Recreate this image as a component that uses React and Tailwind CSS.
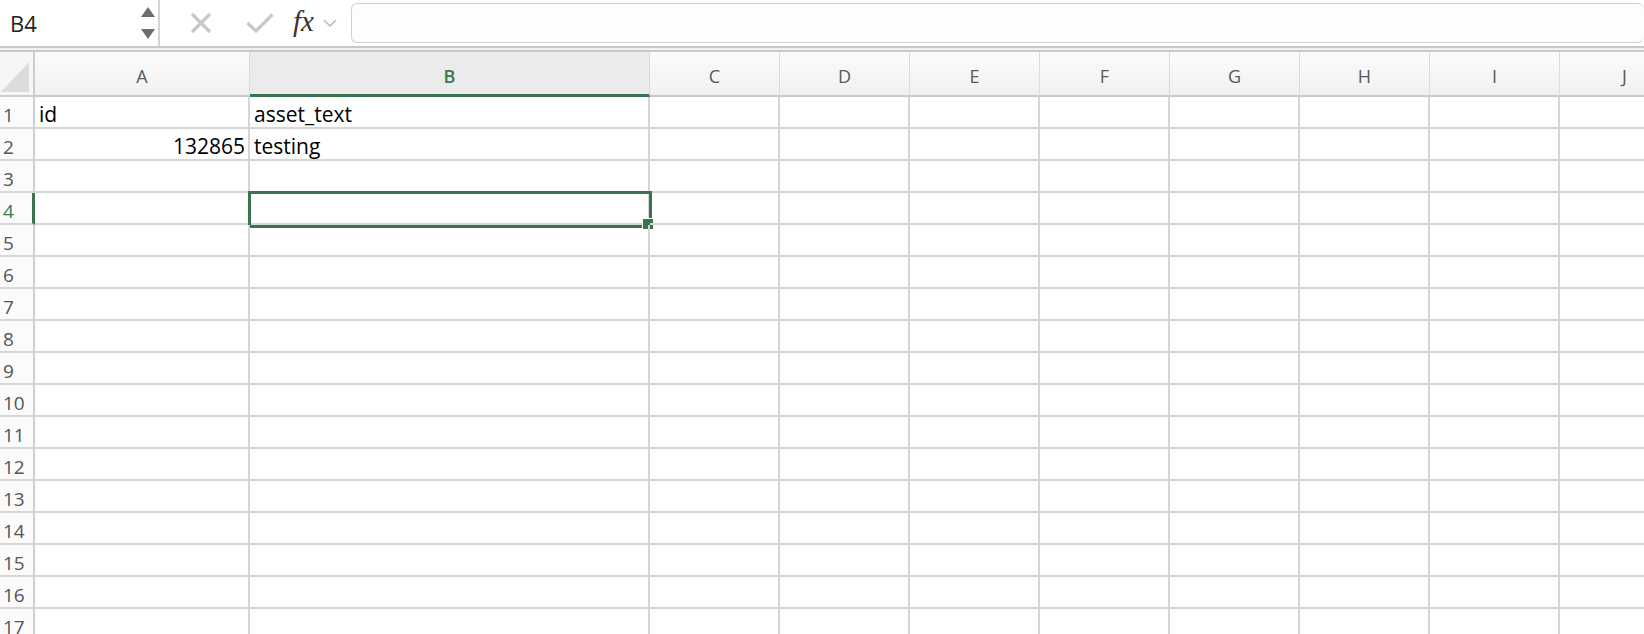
import React from 'react';

const columns = [
  { id: 'A', w: 215 },
  { id: 'B', w: 400 },
  { id: 'C', w: 130 },
  { id: 'D', w: 130 },
  { id: 'E', w: 130 },
  { id: 'F', w: 130 },
  { id: 'G', w: 130 },
  { id: 'H', w: 130 },
  { id: 'I', w: 130 },
  { id: 'J', w: 130 },
];

const data = {
  1: { A: { v: 'id' }, B: { v: 'asset_text' } },
  2: { A: { v: '132865', right: true }, B: { v: 'testing' } },
};

const rows = Array.from({ length: 17 }, (_, i) => i + 1);

const gridCols = 'grid grid-cols-[35px_215px_400px_130px_130px_130px_130px_130px_130px_130px_130px]';

const Toolbar = () => (
  <div className="flex h-[46px] bg-white">
    {/* Name box */}
    <div className="flex w-[160px] shrink-0 items-center justify-between border-r-2 border-[#d4d4d4] pl-[10px] pr-[3px]">
      <span className="text-[22px] text-[#222] pt-[1px]">B4</span>
      <div className="flex flex-col gap-[12px]">
        <svg width="14" height="10" viewBox="0 0 14 10">
          <polygon points="7,0 14,10 0,10" fill="#6e6e6e" />
        </svg>
        <svg width="14" height="10" viewBox="0 0 14 10">
          <polygon points="0,0 14,0 7,10" fill="#6e6e6e" />
        </svg>
      </div>
    </div>

    {/* Cancel / enter / fx */}
    <div className="flex items-center pl-[30px]">
      <svg width="22" height="22" viewBox="0 0 22 22">
        <path d="M2 2 L20 20 M20 2 L2 20" stroke="#c8c8c8" strokeWidth="3.2" fill="none" />
      </svg>
      <svg className="ml-[34px]" width="28" height="20" viewBox="0 0 28 20">
        <path d="M1.5 10 L10 18 L26.5 1.5" stroke="#c8c8c8" strokeWidth="3.2" fill="none" />
      </svg>
      <span className="ml-[19px] pb-[4px] text-[29px] italic text-[#333] leading-none font-['Liberation_Serif',serif]">
        fx
      </span>
      <svg className="ml-[9px]" width="14" height="8" viewBox="0 0 14 8">
        <path d="M1 1 L7 7 L13 1" stroke="#bdbdbd" strokeWidth="1.6" fill="none" />
      </svg>
    </div>

    {/* Formula input */}
    <div className="ml-[14px] mt-[3px] h-[40px] flex-1 rounded-[6px] border border-r-0 border-[#cfcfcf] bg-[#fdfdfd]" />
  </div>
);

const ColumnHeader = () => (
  <div className={`${gridCols} grid-rows-[45px] h-[45px]`}>
    <div className="relative border-r-2 border-b-2 border-[#cdcdcd] bg-[#f6f6f6]">
      <svg className="absolute right-[4px] bottom-[3px]" width="28" height="30" viewBox="0 0 28 30">
        <polygon points="28,0 28,30 0,30" fill="#dcdcdc" />
      </svg>
    </div>
    {columns.map((c) => {
      const active = c.id === 'B';
      return (
        <div
          key={c.id}
          className={`flex items-center justify-center pt-[5px] text-[18px] leading-[24px] border-r border-[#dcdcdc] ${
            active
              ? 'bg-[#ebebeb] text-[#3a7a4d] font-semibold border-b-[3px] border-b-[#3b7350]'
              : 'bg-gradient-to-b from-[#fbfbfb] to-[#f1f1f1] text-[#585858] border-b-2 border-b-[#c9c9c9]'
          }`}
        >
          {c.id}
        </div>
      );
    })}
  </div>
);

const Row = ({ n }) => {
  const activeRow = n === 4;
  return (
    <div className={`${gridCols} grid-rows-[32px] h-[32px]`}>
      <div
        className={`pl-[3px] pt-[6px] text-[19px] leading-[24px] bg-[#fbfbfb] border-b-2 border-b-[#d6d6d6] ${
          activeRow ? 'text-[#3a7a4d] border-r-[3px] border-r-[#3b7350]' : 'text-[#555] border-r-2 border-r-[#cfcfcf]'
        }`}
      >
        {n}
      </div>
      {columns.map((c) => {
        const cell = data[n] && data[n][c.id];
        const selected = activeRow && c.id === 'B';
        return (
          <div
            key={c.id}
            className={`relative flex pt-[5px] text-[21px] leading-[24px] text-black border-r-2 border-b-2 border-[#d6d6d6] whitespace-nowrap ${
              cell && cell.right ? 'justify-end pr-[3px]' : 'pl-[4px]'
            }`}
          >
            {cell ? cell.v : ''}
            {selected && (
              <>
                <div className="absolute -left-[2px] -top-[2px] -right-[4px] -bottom-[5px] border-[3px] border-[#3b7350]" />
                <div className="absolute left-[392px] top-[25px] h-[12px] w-[12px] border border-white bg-[#3b7350]" />
              </>
            )}
          </div>
        );
      })}
    </div>
  );
};

export default function App() {
  return (
    <div className="h-[634px] w-full overflow-hidden bg-white font-['Open_Sans',sans-serif]">
      <Toolbar />
      {/* Divider between formula bar and grid */}
      <div className="h-[6px] border-t-2 border-b-2 border-[#c9c9c9] bg-[#f2f2f2]" />
      <ColumnHeader />
      {rows.map((n) => (
        <Row key={n} n={n} />
      ))}
    </div>
  );
}
